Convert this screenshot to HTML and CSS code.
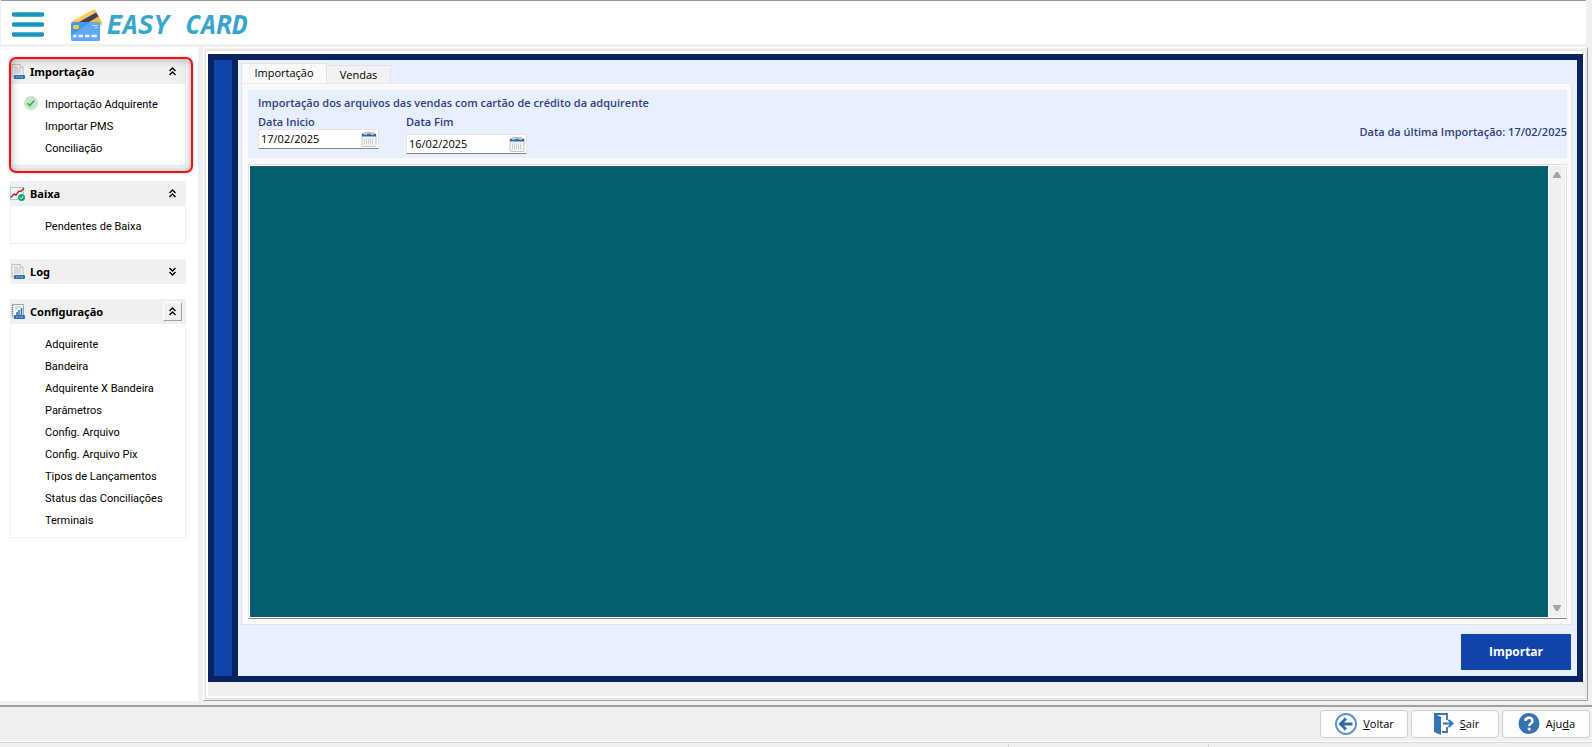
FILE: index.html
```html
<!DOCTYPE html>
<html lang="pt-BR">
<head>
<meta charset="utf-8">
<title>Easy Card</title>
<link rel="stylesheet" href="styles.css">
</head>
<body>
<svg class="defs" aria-hidden="true">
  <symbol id="doc" viewBox="0 0 16 16">
    <path d="M2 .5h8l3 3V13H2z" fill="#f4f4f4" stroke="#bdbdbd"/>
    <path d="M10 .5v3h3" fill="none" stroke="#bdbdbd"/>
    <path d="M4 5h7M4 7h7M4 9h7M4 3h4" stroke="#bcbcbc"/>
    <rect x="4" y="11" width="11" height="4" rx="1" fill="#2f6fae"/>
    <path d="M6 13h1.500M8.500 13h1.500M11 13h2" stroke="#a9c9e6"/>
  </symbol>
  <symbol id="chart" viewBox="0 0 16 16">
    <rect x=".5" y="1.500" width="13" height="12" fill="#eef6fa" stroke="#a9cfdd"/>
    <path d="M1 11.500 4 8l2 1 3-4 2 .5 3-3.500" fill="none" stroke="#c9252c" stroke-width="1.500"/>
    <circle cx="11.500" cy="11.500" r="3.500" fill="#17a673"/>
    <path d="m9.800 11.500 1.300 1.300 2.200-2.500" fill="none" stroke="#fff"/>
  </symbol>
  <symbol id="report" viewBox="0 0 16 16">
    <path d="M2.500 .5h11v13h-11z" fill="#f7fafc" stroke="#8fb0cb"/>
    <path d="M2.500 1v12" stroke="#999" stroke-dasharray="1 1" stroke-width="2"/>
    <path d="M5 3h6M5 5h3" stroke="#bbb"/>
    <path d="M7 11V8M9 11V6M11.500 11V4" stroke="#2f6fae" stroke-width="1.500"/>
    <rect x="4" y="11" width="11" height="4" rx="1" fill="#2f6fae"/>
    <path d="M6 13h1.500M8.500 13h1.500M11 13h2" stroke="#a9c9e6"/>
  </symbol>
  <symbol id="up" viewBox="0 0 9 9">
    <path d="m1.500 4 3-3 3 3M1.500 8l3-3 3 3" fill="none" stroke="#000" stroke-width="1.400"/>
  </symbol>
  <symbol id="down" viewBox="0 0 9 9">
    <path d="m1.500 1 3 3 3-3M1.500 5l3 3 3-3" fill="none" stroke="#000" stroke-width="1.400"/>
  </symbol>
  <symbol id="calendar" viewBox="0 0 16 16">
    <rect x="1" y="2.500" width="14" height="13" rx="1" fill="#f5f5f5" stroke="#c4c4c4"/>
    <path d="M3 2.500c0-2 3-2 3 0M10 2.500c0-2 3-2 3 0M6 1.500h4" fill="none" stroke="#b5b5b5"/>
    <path d="M1 3h14v2.500H1z" fill="#2a6cad"/>
    <path d="M3 3.500h3M10 3.500h3" stroke="#9fc0df"/>
    <path d="M3.500 7.500v6M5.500 7.500v6M7.500 7.500v6M9.500 7.500v6M11.500 7.500v6" stroke="#cdcdcd"/>
  </symbol>
</svg>

<header class="topbar">
  <button class="menu" aria-label="Menu">
    <svg width="32" height="25" viewBox="0 0 32 25"><path d="M2 2.500h28M2 12.500h28M2 22.500h28" stroke="#1797bd" stroke-width="4.600" stroke-linecap="round"/></svg>
  </button>
  <div class="brand">
    <svg width="33" height="32" viewBox="0 0 33 32">
      <path d="M1 13 23 1q2-1 3 1l6 12q0 2-2 3l-6 3z" fill="#f9b938"/>
      <path d="M1 13 23 1q2-1 3 1l1 2L9 14z" fill="#fbc75a"/>
      <path d="m9 13 17-9.500 2.500 4L19 13z" fill="#3d4458"/>
      <rect x="1" y="13" width="29" height="19" rx="2" fill="#4698ee"/>
      <path d="M1 27 20 13h8q2 0 2 2v15q0 2-2 2H3q-2 0-2-2z" fill="#5fa9f6"/>
      <rect x="3" y="16" width="6" height="4" rx="1" fill="#fbc540"/>
      <path d="M22 16.500h6M25 18.500h3" stroke="#b8dcff"/>
      <path d="M3 27h3.500M8.500 27H13M15 27h4.500M21.500 27H27" stroke="#e4f2ff" stroke-width="2.400"/>
    </svg>
    <span>EASY CARD</span>
  </div>
</header>

<div class="middle">
  <nav class="sidebar">
    <section class="group current">
      <h2><svg class="ico"><use href="#doc"/></svg><span>Importação</span><button aria-label="Recolher Importação"><svg class="chev"><use href="#up"/></svg></button></h2>
      <ul>
        <li><svg class="tick" viewBox="0 0 14 14"><circle cx="7" cy="7" r="7" fill="#c5e6c7"/><path d="m3.500 7.300 2.300 2.300 4.500-5" fill="none" stroke="#43a554" stroke-width="1.500"/></svg><a href="#">Importação Adquirente</a></li>
        <li><a href="#">Importar PMS</a></li>
        <li><a href="#">Conciliação</a></li>
      </ul>
    </section>
    <section class="group">
      <h2><svg class="ico"><use href="#chart"/></svg><span>Baixa</span><button aria-label="Recolher Baixa"><svg class="chev"><use href="#up"/></svg></button></h2>
      <ul>
        <li><a href="#">Pendentes de Baixa</a></li>
      </ul>
    </section>
    <section class="group">
      <h2><svg class="ico"><use href="#doc"/></svg><span>Log</span><button aria-label="Expandir Log"><svg class="chev"><use href="#down"/></svg></button></h2>
    </section>
    <section class="group">
      <h2><svg class="ico"><use href="#report"/></svg><span>Configuração</span><button class="raised" aria-label="Recolher Configuração"><svg class="chev"><use href="#up"/></svg></button></h2>
      <ul>
        <li><a href="#">Adquirente</a></li>
        <li><a href="#">Bandeira</a></li>
        <li><a href="#">Adquirente X Bandeira</a></li>
        <li><a href="#">Parâmetros</a></li>
        <li><a href="#">Config. Arquivo</a></li>
        <li><a href="#">Config. Arquivo Pix</a></li>
        <li><a href="#">Tipos de Lançamentos</a></li>
        <li><a href="#">Status das Conciliações</a></li>
        <li><a href="#">Terminais</a></li>
      </ul>
    </section>
  </nav>

  <div class="frame">
    <div class="frame-inner">
      <main class="window">
        <div class="stripe"></div>
        <div class="content">
          <div class="tabs" role="tablist">
            <button class="tab active" role="tab" aria-selected="true">Importação</button>
            <button class="tab" role="tab" aria-selected="false">Vendas</button>
          </div>
          <div class="page">
            <form class="filters">
              <div class="filter-main">
                <p>Importação dos arquivos das vendas com cartão de crédito da adquirente</p>
                <div class="dates">
                  <div class="field">
                    <label for="inicio">Data Inicio</label>
                    <div class="date"><input id="inicio" type="text" value="17/02/2025"><button type="button" aria-label="Abrir calendário"><svg class="ico"><use href="#calendar"/></svg></button></div>
                  </div>
                  <div class="field end">
                    <label for="fim">Data Fim</label>
                    <div class="date"><input id="fim" type="text" value="16/02/2025"><button type="button" aria-label="Abrir calendário"><svg class="ico"><use href="#calendar"/></svg></button></div>
                  </div>
                </div>
              </div>
              <p class="last">Data da última Importação: 17/02/2025</p>
            </form>
            <div class="log">
              <textarea aria-label="Log da importação" readonly></textarea>
              <div class="scroll">
                <button aria-label="Rolar para cima"><svg width="8" height="6" viewBox="0 0 8 6"><path d="M0 6V5l3-5h2l3 5v1z" fill="#a3a3a3"/></svg></button>
                <button aria-label="Rolar para baixo"><svg width="8" height="6" viewBox="0 0 8 6"><path d="M0 0v1l3 5h2l3-5V0z" fill="#a3a3a3"/></svg></button>
              </div>
            </div>
          </div>
          <div class="actions"><button class="primary">Importar</button></div>
        </div>
      </main>
    </div>
  </div>
</div>

<footer class="toolbar">
  <button><svg width="24" height="24" viewBox="0 0 24 24"><circle cx="12" cy="12" r="10" fill="#fff" stroke="#6593c4" stroke-width="2"/><path d="M18.500 12H7M12 6.500 6.500 12l5.500 5.500" fill="none" stroke="#2f6bab" stroke-width="3"/></svg><span><u>V</u>oltar</span></button>
  <button><svg width="24" height="24" viewBox="0 0 24 24"><path d="M3 2h13v6M16 15v5h-5" fill="none" stroke="#3673b3" stroke-width="1.800"/><path d="m3 1.500 7 3.500v18l-7-3z" fill="#3673b3"/><path d="M12 11.500h8M17.500 8l4 3.500-4 3.500" fill="none" stroke="#3673b3" stroke-width="2"/></svg><span><u>S</u>air</span></button>
  <button><svg width="24" height="24" viewBox="0 0 24 24"><circle cx="12" cy="11.500" r="10.500" fill="#3673b3"/><path d="M8.500 9c0-4.500 7-4.500 7 0 0 2.500-3.300 2.600-3.300 5" fill="none" stroke="#fff" stroke-width="2.500"/><circle cx="12.200" cy="17" r="1.600" fill="#fff"/></svg><span>Aju<u>d</u>a</span></button>
</footer>
<div class="status"><span></span><span></span><span></span></div>
</body>
</html>
```
FILE: styles.css
```css
* { box-sizing: border-box; }

body {
  margin: 0;
  min-height: 100vh;
  display: flex;
  flex-direction: column;
  background: #f0f0f0;
  color: #000;
  font: 11px/16px "Open Sans", sans-serif;
}

button { font: inherit; color: inherit; border: 0; padding: 0; background: none; }
h2, p, ul { margin: 0; padding: 0; }
svg { display: block; flex: none; }
.defs { display: none; }
.ico { width: 16px; height: 16px; }
.chev { width: 9px; height: 9px; }

.topbar {
  display: flex;
  align-items: center;
  gap: 26px;
  height: 44px;
  margin: 0 6px 3px 1px;
  padding: 4px 11px 0;
  background: #fff;
  border-top: 1px solid #999;
}
.brand {
  display: flex;
  align-items: center;
  gap: 4px;
  color: #36a6cc;
  font: italic bold 26px/32px "DejaVu Sans Mono", monospace;
}

.middle { flex: 1; display: flex; }

.sidebar {
  width: 198px;
  margin-bottom: 4px;
  padding: 12px 12px 0 10px;
  background: #fff;
  display: flex;
  flex-direction: column;
  gap: 15px;
  font: 11px/22px Roboto, sans-serif;
}
.group { position: relative; }
.group h2 {
  display: flex;
  align-items: center;
  gap: 4px;
  height: 25px;
  padding-right: 4px;
  background: #f0f0f0;
  font: bold 11px/22px "Noto Sans", sans-serif;
}
.group h2 button {
  width: 19px;
  height: 19px;
  margin-left: auto;
  display: grid;
  place-items: center;
}
.group h2 .raised {
  border: 1px solid;
  border-color: #fff #a0a0a0 #a0a0a0 #fff;
}
.group ul {
  list-style: none;
  padding: 10px 0 5px 34px;
  border: solid #f0f0f0;
  border-width: 0 1px 1px;
}
.group li { position: relative; white-space: nowrap; }
.group a { color: #000; text-decoration: none; }
.tick { position: absolute; left: -21px; top: 2px; width: 14px; height: 14px; }
.current::after {
  content: "";
  position: absolute;
  inset: -2px -7px -7px -1px;
  border: 2px solid #f01018;
  border-radius: 7px;
  box-shadow: inset 0 0 9px rgba(0, 0, 0, .35), 0 0 3px rgba(0, 0, 0, .25);
  pointer-events: none;
}

.frame {
  flex: 1;
  display: flex;
  margin: 0 4px 4px 5px;
  padding: 2px 1px 1px;
  border: 1px solid;
  border-color: #fff #a0a0a0 #a0a0a0 #fff;
}
.frame-inner {
  flex: 1;
  display: flex;
  padding: 3px 2px 16px;
  border: 1px solid #e3e3e3;
  background: linear-gradient(#f0f0f0, #f0f0f0) bottom 2px left 2px / 100% 14px no-repeat #fff;
}
.window {
  flex: 1;
  display: flex;
  border: 6px solid #08245f;
}
.stripe { width: 24px; background: #1044ab; border-right: 6px solid #08245f; }
.content {
  flex: 1;
  display: flex;
  flex-direction: column;
  padding: 3px 5px 6px 3px;
  background: #e8f0ff;
}

.tabs { display: flex; align-items: flex-end; }
.tab {
  width: 64px;
  height: 18px;
  background: #f2f2f2;
  border: solid #e3e3e3;
  border-width: 1px 1px 0 0;
}
.tab.active {
  width: 86px;
  height: 20px;
  padding-bottom: 2px;
  background: #f9f9f9;
  border-left-width: 1px;
}
.page {
  flex: 1;
  display: flex;
  flex-direction: column;
  gap: 6px;
  padding: 6px 4px 5px 6px;
  background: #f9f9f9;
  border: 1px solid #e3e3e3;
  border-top-color: #ececec;
}
.filters {
  display: flex;
  justify-content: space-between;
  height: 68px;
  padding-left: 10px;
  background: #e8f0ff;
  color: #33407f;
  font-weight: 600;
}
.filter-main { padding-top: 5px; }
.last { padding-top: 34px; }
.dates { display: flex; gap: 27px; padding-top: 3px; }
.field { display: flex; flex-direction: column; line-height: 15px; }
.field.end { gap: 5px; }
.date {
  display: flex;
  align-items: center;
  width: 121px;
  height: 20px;
  padding: 0 1px 0 2px;
  background: #fff;
  border: 1px solid #e3e3e3;
  border-bottom-color: #868686;
}
.date input {
  flex: 1;
  min-width: 0;
  padding: 0;
  border: 0;
  outline: 0;
  background: none;
  color: #000;
  font: 11px/16px "Open Sans", sans-serif;
}

.log {
  flex: 1;
  display: flex;
  padding: 1px;
  background: #fff;
  border: 1px solid #e3e3e3;
  border-bottom-color: #868686;
}
.log textarea {
  flex: 1;
  padding: 0;
  border: 0;
  outline: 0;
  resize: none;
  background: #065f6e;
  color: #fff;
}
.scroll {
  width: 16px;
  margin-left: 1px;
  padding: 6px 0;
  background: #f0f0f0;
  display: flex;
  flex-direction: column;
  justify-content: space-between;
  align-items: center;
}

.actions { display: flex; justify-content: flex-end; padding: 9px 1px 0 0; }
.primary {
  width: 110px;
  height: 36px;
  background: #1044ab;
  color: #fff;
  font-size: 12px;
  font-weight: 700;
}

.toolbar {
  display: flex;
  justify-content: flex-end;
  gap: 3px;
  padding: 3px 2px;
  border-top: 2px solid #a0a09f;
}
.toolbar button {
  display: flex;
  align-items: center;
  justify-content: center;
  gap: 5px;
  width: 88px;
  height: 28px;
  background: #fdfdfd;
  border: 1px solid #d0d0d0;
  border-radius: 4px;
}
.status {
  display: grid;
  grid-template-columns: 1009px 200px 1fr;
  height: 6px;
  padding-top: 2px;
  border-top: 1px solid #fff;
  box-shadow: inset 0 1px #d7d7d7;
}
.status span { border-right: 1px solid #d7d7d7; }
.status span:last-child { border: 0; }
```
